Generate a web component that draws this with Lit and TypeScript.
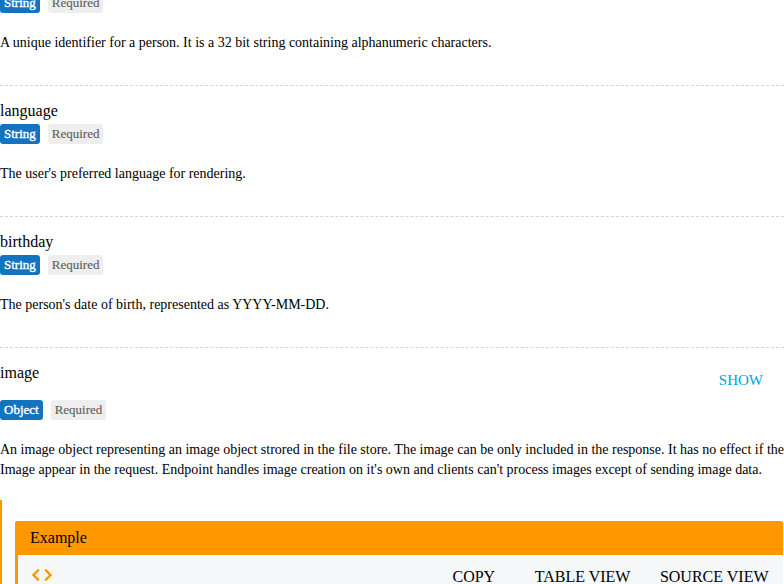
import { LitElement, html, css } from "lit";
import { customElement, property } from "lit/decorators.js";

@customElement("type-badges")
class TypeBadges extends LitElement {
  @property() type = "String";
  static styles = css`
    :host { display: flex; gap: 8px; height: 20px; font-size: 13px; line-height: 20px; }
    .badge { box-sizing: border-box; padding: 0 4px; border-radius: 3px; white-space: nowrap; }
    .type { background: #1473bf; color: #fff; -webkit-text-stroke: 0.35px #fff; }
    .required { background: #eee; color: #616161; -webkit-text-stroke: 0.15px #616161; }
  `;
  render() {
    return html`<span class="badge type">${this.type}</span><span class="badge required">Required</span>`;
  }
}

@customElement("property-item")
class PropertyItem extends LitElement {
  @property() name = "";
  @property() description = "";
  static styles = css`
    :host { display: block; box-sizing: border-box; height: 131px; padding-top: 13px; border-bottom: 1px dashed #d3d5d6; }
    .name { height: 25px; font-size: 16px; line-height: 24px; }
    .description { margin: 20px 0 0; font-size: 14px; line-height: 20px; }
  `;
  render() {
    return html`
      <div class="name">${this.name}</div>
      <type-badges></type-badges>
      <p class="description">${this.description}</p>`;
  }
}

@customElement("example-panel")
class ExamplePanel extends LitElement {
  static styles = css`
    :host { display: block; margin-top: 20px; padding: 21px 1px 0 13px; border-left: 2px solid #ff9800; }
    .panel { border-left: 3px solid #ff9800; border-radius: 2px 2px 0 0; background: #f5f7f9; overflow: hidden; }
    .title { height: 34px; padding-left: 12px; background: #ff9800; font-size: 16px; line-height: 34px; }
    .toolbar { display: flex; align-items: center; height: 43px; padding: 0 14.5px 0 12px; font-size: 16px; }
    .icon { width: 24px; height: 24px; margin-top: -3px; fill: #ff9800; stroke: #ff9800; stroke-width: 0.5; }
    .actions { display: flex; margin-left: auto; }
    .copy { margin-right: 39.5px; }
    .table { margin-right: 29.5px; }
  `;
  render() {
    return html`
      <div class="panel">
        <div class="title">Example</div>
        <div class="toolbar">
          <svg class="icon" viewBox="0 0 24 24"><path d="M9.4 16.6L4.8 12l4.6-4.6L8 6l-6 6 6 6 1.4-1.4zm5.2 0l4.6-4.6-4.6-4.6L16 6l6 6-6 6-1.4-1.4z" /></svg>
          <div class="actions">
            <span class="copy">COPY</span><span class="table">TABLE VIEW</span><span>SOURCE VIEW</span>
          </div>
        </div>
      </div>`;
  }
}

@customElement("app-root")
class AppRoot extends LitElement {
  static styles = css`
    :host { display: block; height: 584px; overflow: hidden; background: #fff; color: #000; font-family: "Liberation Serif", "Times New Roman", serif; }
    .list { margin-top: -45px; }
    .object { padding-top: 13px; }
    .head { display: flex; justify-content: space-between; height: 39px; }
    .name { font-size: 16px; line-height: 24px; }
    .show { margin: 8px 21px 0 0; font-size: 15px; line-height: 22px; color: #00a1df; }
    .description { margin: 20px 0 0; font-size: 14px; line-height: 20px; white-space: nowrap; }
  `;
  private items = [
    ["", "A unique identifier for a person. It is a 32 bit string containing alphanumeric characters."],
    ["language", "The user's preferred language for rendering."],
    ["birthday", "The person's date of birth, represented as YYYY-MM-DD."],
  ];
  render() {
    return html`
      <div class="list">
        ${this.items.map(([name, text]) => html`<property-item .name=${name} .description=${text}></property-item>`)}
        <div class="object">
          <div class="head"><span class="name">image</span><span class="show">SHOW</span></div>
          <type-badges .type=${"Object"}></type-badges>
          <p class="description">An image object representing an image object strored in the file store. The image can be only included in the response. It has no effect if the<br />Image appear in the request. Endpoint handles image creation on it's own and clients can't process images except of sending image data.</p>
          <example-panel></example-panel>
        </div>
      </div>`;
  }
}
